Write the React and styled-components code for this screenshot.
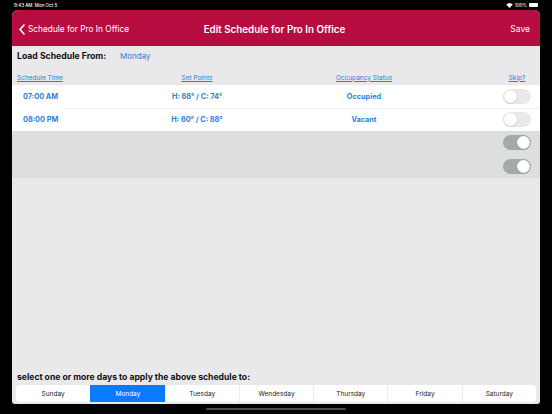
import React, { useState } from 'react';
import styled, { createGlobalStyle } from 'styled-components';

const GlobalStyle = createGlobalStyle`
    html, body {
        margin: 0;
        padding: 0;
        background: #000;
    }
    body {
        font-family: 'Inter', 'Liberation Sans', sans-serif;
    }
`

const schedule = [
    { time: '07:00 AM', points: 'H: 68° / C: 74°', status: 'Occupied' },
    { time: '08:00 PM', points: 'H: 60° / C: 88°', status: 'Vacant' },
]

const days = ['Sunday', 'Monday', 'Tuesday', 'Wendesday', 'Thursday', 'Friday', 'Saturday']

function App() {
    const [selected, setSelected] = useState(['Monday'])

    const toggleDay = (day) => {
        setSelected(selected.includes(day) ? selected.filter(d => d !== day) : [...selected, day])
    }

    return (
        <Screen>
            <GlobalStyle />
            <StatusBar>
                <span>9:43 AM&nbsp;&nbsp;Mon Oct 5</span>
                <StatusRight>
                    <svg width="7" height="5" viewBox="0 0 14 10">
                        <path d="M7 10 L0.5 3.2 A9.5 9.5 0 0 1 13.5 3.2 Z" fill="#fff" />
                    </svg>
                    <span>100%</span>
                    <Battery />
                </StatusRight>
            </StatusBar>
            <Window>
                <NavBar>
                    <BackLink>
                        <svg width="6" height="11" viewBox="0 0 6 11">
                            <path d="M5 1 L1 5.5 L5 10" stroke="#fff" strokeWidth="1.6" fill="none" strokeLinecap="round" strokeLinejoin="round" />
                        </svg>
                        Schedule for Pro In Office
                    </BackLink>
                    <Title>Edit Schedule for Pro In Office</Title>
                    <NavAction>Save</NavAction>
                </NavBar>

                <LoadRow>
                    <LoadLabel>Load Schedule From:</LoadLabel>
                    <LinkText>Monday</LinkText>
                </LoadRow>

                <HeaderRow>
                    <HeadCell align="left">Schedule Time</HeadCell>
                    <HeadCell>Set Points</HeadCell>
                    <HeadCell>Occupancy Status</HeadCell>
                    <span />
                    <HeadCell>Skip?</HeadCell>
                </HeaderRow>

                {schedule.map((row, i) => (
                    <Row key={row.time} divider={i > 0}>
                        <TimeCell>{row.time}</TimeCell>
                        <Cell>{row.points}</Cell>
                        <Cell>{row.status}</Cell>
                        <span />
                        <Toggle />
                    </Row>
                ))}
                <Row muted>
                    <span /><span /><span /><span />
                    <Toggle on disabled />
                </Row>
                <Row muted>
                    <span /><span /><span /><span />
                    <Toggle on disabled />
                </Row>

                <Spacer />

                <Footer>
                    <FooterLabel>select one or more days to apply the above schedule to:</FooterLabel>
                    <Segmented>
                        {days.map(day => (
                            <Segment key={day} active={selected.includes(day)} onClick={() => toggleDay(day)}>
                                {day}
                            </Segment>
                        ))}
                    </Segmented>
                </Footer>
            </Window>
            <HomeBar />
        </Screen>
    )
}

function Toggle({ on, disabled }) {
    return (
        <Track on={on} disabled={disabled}>
            <Knob on={on} />
        </Track>
    )
}

export default App

const Screen = styled.div`
    width: 552px;
    height: 414px;
    background: #000;
    display: flex;
    flex-direction: column;
    overflow: hidden;
`

const StatusBar = styled.div`
    height: 10px;
    padding: 0 14px 0 14px;
    display: flex;
    align-items: center;
    justify-content: space-between;
    color: #fff;
    font-size: 4.5px;
    font-weight: 500;
`

const StatusRight = styled.div`
    display: flex;
    align-items: center;
    gap: 2px;
`

const Battery = styled.div`
    width: 9px;
    height: 4px;
    border-radius: 1px;
    background: #fff;
`

const Window = styled.div`
    margin: 0 12px;
    width: 528px;
    height: 394px;
    background: #e9e8eb;
    border-radius: 6px 6px 3px 3px;
    overflow: hidden;
    display: flex;
    flex-direction: column;
`

const NavBar = styled.div`
    height: 36px;
    flex-shrink: 0;
    background: #b60c40;
    display: grid;
    grid-template-columns: 1fr auto 1fr;
    align-items: center;
    padding: 0 10px 0 7px;
    color: #fff;
`

const BackLink = styled.div`
    display: flex;
    align-items: center;
    gap: 3px;
    font-size: 8.3px;
    padding-top: 2px;
`

const Title = styled.div`
    font-size: 9.8px;
    font-weight: 600;
    padding-top: 2px;
`

const NavAction = styled.div`
    justify-self: end;
    font-size: 8.5px;
    padding-top: 2px;
`

const LoadRow = styled.div`
    height: 20px;
    display: flex;
    align-items: center;
    padding: 0 5px;
`

const LoadLabel = styled.div`
    font-size: 8.7px;
    font-weight: 700;
    color: #111;
    width: 103px;
`

const LinkText = styled.div`
    font-size: 8px;
    color: #2d7fdc;
`

const grid = `
    display: grid;
    grid-template-columns: 110px 150px 184px 1fr 28px;
    padding-right: 9px;
    align-items: center;
`

const HeaderRow = styled.div`
    ${grid}
    height: 15px;
    margin-top: 4px;
`

const HeadCell = styled.div`
    font-size: 6.5px;
    color: #2d7fdc;
    text-decoration: underline;
    text-align: ${p => p.align || 'center'};
    padding-left: ${p => p.align === 'left' ? '5px' : '0'};
    white-space: nowrap;
`

const Row = styled.div`
    ${grid}
    height: ${p => p.muted ? '23.5px' : '23px'};
    background: ${p => p.muted ? '#dcdfdd' : '#fff'};
    position: relative;
    &::before {
        content: '';
        display: ${p => p.divider ? 'block' : 'none'};
        position: absolute;
        left: 51px;
        right: 0;
        top: 0;
        border-top: 1px solid #f0f0f2;
    }
`

const Cell = styled.div`
    font-size: 7.3px;
    font-weight: 700;
    color: #2d7fdc;
    text-align: center;
`

const TimeCell = styled(Cell)`
    text-align: left;
    padding-left: 11px;
`

const Track = styled.div`
    width: 28px;
    height: 15px;
    border-radius: 8px;
    background: ${p => p.on ? '#a4aaa7' : '#e9e9eb'};
    position: relative;
`

const Knob = styled.div`
    position: absolute;
    top: 1px;
    left: ${p => p.on ? '14px' : '1px'};
    width: 13px;
    height: 13px;
    border-radius: 50%;
    background: #fff;
    box-shadow: 0 0.5px 1.5px rgba(0, 0, 0, 0.25);
`

const Spacer = styled.div`
    flex: 1;
`

const Footer = styled.div`
    padding: 0 4px 2px 4px;
    display: flex;
    flex-direction: column;
    gap: 3px;
`

const FooterLabel = styled.div`
    font-size: 8.6px;
    font-weight: 700;
    color: #111;
    padding-left: 1px;
`

const Segmented = styled.div`
    display: grid;
    grid-template-columns: repeat(7, 1fr);
    height: 17px;
    background: #fff;
    border-radius: 4px;
    overflow: hidden;
`

const Segment = styled.div`
    display: flex;
    align-items: center;
    justify-content: center;
    font-size: 6.5px;
    cursor: pointer;
    color: ${p => p.active ? '#fff' : '#222'};
    background: ${p => p.active ? '#0a7aff' : 'transparent'};
    border-left: 1px solid ${p => p.active ? '#0a7aff' : '#ececee'};
    &:first-child {
        border-left: none;
    }
`

const HomeBar = styled.div`
    width: 140px;
    height: 2px;
    border-radius: 1px;
    background: #4a4a4a;
    margin: 4px auto 0 auto;
`
